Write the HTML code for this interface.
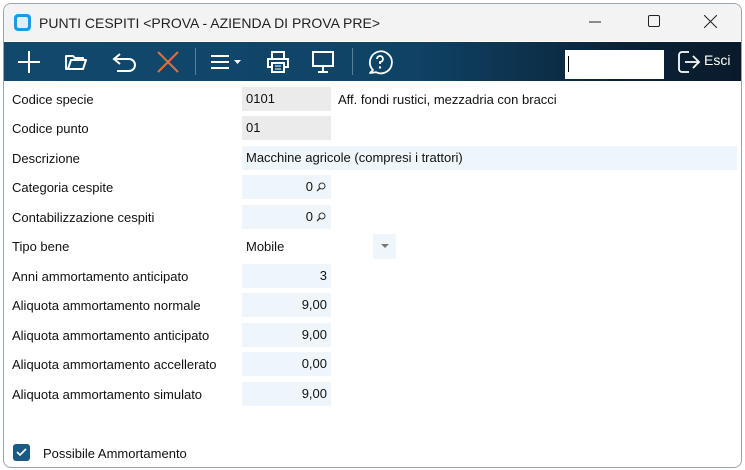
<!DOCTYPE html>
<html><head><style>
body{margin:0;width:745px;height:470px;background:#fff;font-family:"Liberation Sans",sans-serif;font-size:13px;color:#111;position:relative;overflow:hidden}
.win{position:absolute;left:3px;top:3px;width:737px;height:463px;border:1px solid #9aa4ad;border-radius:8px;overflow:hidden;background:#fff}
.title{position:absolute;left:0;top:0;width:100%;height:37px;background:#f3f3f3}
.tb{position:absolute;left:0;top:38px;width:100%;height:39px;background:linear-gradient(90deg,#11496d 0%,#0f4366 55%,#0b2236 85%,#091a2b 100%)}
.lbl{position:absolute;left:8px}
.f{position:absolute;left:238px;width:89px;height:24px;background:#eef6fc;line-height:24px;box-sizing:border-box;padding:0 4px}
.g{background:#ebebeb}
.r{text-align:right}
svg{position:absolute}
</style></head><body>
<div class="win">
<div class="title">
<div style="position:absolute;left:10px;top:10px;width:17px;height:17px;border-radius:4px;background:#1e9be0"><div style="position:absolute;left:3px;top:3px;width:11px;height:11px;border-radius:2px;background:#d8f0ff"></div></div>
<div style="position:absolute;left:35px;top:11px;font-size:14px;color:#222">PUNTI CESPITI &lt;PROVA - AZIENDA DI PROVA PRE&gt;</div>
<svg style="left:585px;top:16px" width="12" height="4"><line x1="0" y1="2" x2="12" y2="2" stroke="#222"/></svg>
<svg style="left:644px;top:11px" width="12" height="12"><rect x="0.5" y="0.5" width="11" height="11" rx="1.5" fill="none" stroke="#222"/></svg>
<svg style="left:700px;top:11px" width="13" height="13"><path d="M0 0L13 13M13 0L0 13" stroke="#222"/></svg>
</div>
<div class="tb">
<svg style="left:13px;top:8px" width="24" height="24"><path d="M12 1V23M1 12H23" stroke="#fff" stroke-width="2"/></svg>
<svg style="left:61px;top:12px" width="22" height="16"><path d="M1 2H8L10 4H18V6H6L3 15H1ZM6 6H21L18 15H3Z" fill="none" stroke="#fff" stroke-width="2" stroke-linejoin="round"/></svg>
<svg style="left:108px;top:10px" width="26" height="20"><path d="M8 2L2 7L8 12M2 7H17A6 6 0 0 1 17 19H5" fill="none" stroke="#fff" stroke-width="2"/></svg>
<svg style="left:153px;top:9px" width="22" height="22"><path d="M1 1L21 21M21 1L1 21" stroke="#e0703a" stroke-width="2"/></svg>
<div style="position:absolute;left:191px;top:6px;width:1px;height:27px;background:#5a7f99"></div>
<svg style="left:206px;top:12px" width="34" height="16"><path d="M1 2H19M1 8H19M1 14H19" stroke="#fff" stroke-width="2"/><path d="M24 6H31L27.5 10Z" fill="#fff"/></svg>
<svg style="left:262px;top:8px" width="24" height="24"><path d="M6 8V2H18V8M6 17H2V9H22V17H18M6 13H18V22H6Z" fill="none" stroke="#fff" stroke-width="2"/><path d="M9 16H15M9 19H15" stroke="#fff"/></svg>
<svg style="left:307px;top:9px" width="24" height="22"><path d="M2 1H22V15H2ZM12 15V20M7 21H17" fill="none" stroke="#fff" stroke-width="2"/></svg>
<div style="position:absolute;left:348px;top:6px;width:1px;height:27px;background:#5a7f99"></div>
<svg style="left:363px;top:7px" width="26" height="26"><path d="M6 21A11 11 0 1 1 9 23.2L3 24Z" fill="none" stroke="#fff" stroke-width="1.8" stroke-linejoin="round"/><path d="M10 10A3 3 0 1 1 13 13V15" fill="none" stroke="#fff" stroke-width="1.8"/><circle cx="13" cy="18.5" r="1.2" fill="#fff"/></svg>
<div style="position:absolute;left:561px;top:8px;width:99px;height:29px;background:#fff"><div style="position:absolute;left:3px;top:6px;width:1px;height:16px;background:#000"></div></div>
<svg style="left:673px;top:8px" width="24" height="24"><path d="M12 2H5A3 3 0 0 0 2 5V19A3 3 0 0 0 5 22H12M8 12H21M16 6L22 12L16 18" fill="none" stroke="#fff" stroke-width="1.8"/></svg>
<div style="position:absolute;left:700px;top:10px;color:#fff;font-size:14px">Esci</div>
</div>
<div class="lbl" style="top:88px">Codice specie</div><div class="f g" style="top:83px">0101</div>
<div style="position:absolute;left:334px;top:88px">Aff. fondi rustici, mezzadria con bracci</div>
<div class="lbl" style="top:117px">Codice punto</div><div class="f g" style="top:112px">01</div>
<div class="lbl" style="top:147px">Descrizione</div><div class="f" style="top:142px;width:495px">Macchine agricole (compresi i trattori)</div>
<div class="lbl" style="top:176px">Categoria cespite</div><div class="f r" style="top:171px;padding-right:18px">0</div>
<svg style="left:312px;top:178px" width="10" height="10"><circle cx="6" cy="4" r="3" fill="none" stroke="#333"/><path d="M4 6L1 9" stroke="#333" stroke-width="1.3"/></svg>
<div class="lbl" style="top:206px">Contabilizzazione cespiti</div><div class="f r" style="top:201px;padding-right:18px">0</div>
<svg style="left:312px;top:208px" width="10" height="10"><circle cx="6" cy="4" r="3" fill="none" stroke="#333"/><path d="M4 6L1 9" stroke="#333" stroke-width="1.3"/></svg>
<div class="lbl" style="top:235px">Tipo bene</div><div style="position:absolute;left:242px;top:235px">Mobile</div>
<div style="position:absolute;left:369px;top:230px;width:23px;height:25px;background:#eef6fc"><svg style="left:8px;top:10px" width="8" height="5"><path d="M0 0H8L4 4Z" fill="#777"/></svg></div>
<div class="lbl" style="top:265px">Anni ammortamento anticipato</div><div class="f r" style="top:260px">3</div>
<div class="lbl" style="top:294px">Aliquota ammortamento normale</div><div class="f r" style="top:289px">9,00</div>
<div class="lbl" style="top:324px">Aliquota ammortamento anticipato</div><div class="f r" style="top:319px">9,00</div>
<div class="lbl" style="top:353px">Aliquota ammortamento accellerato</div><div class="f r" style="top:348px">0,00</div>
<div class="lbl" style="top:383px">Aliquota ammortamento simulato</div><div class="f r" style="top:378px">9,00</div>
<div style="position:absolute;left:9px;top:440px;width:17px;height:17px;border-radius:3px;background:#1b5a82"><svg style="left:3px;top:4px" width="11" height="9"><path d="M1 4L4 7L10 1" fill="none" stroke="#fff" stroke-width="1.6"/></svg></div>
<div style="position:absolute;left:39px;top:442px">Possibile Ammortamento</div>
</div>
</body></html>
